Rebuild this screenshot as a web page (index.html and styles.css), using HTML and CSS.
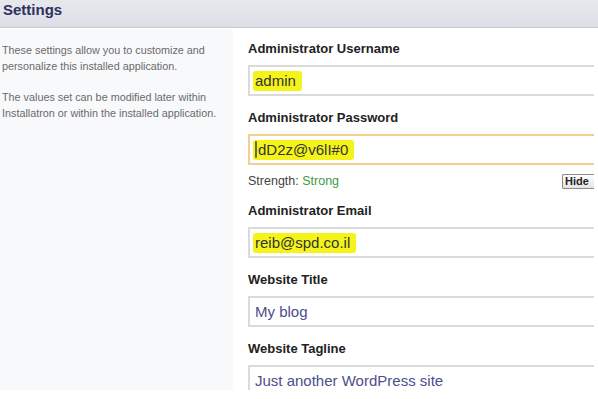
FILE: index.html
```html
<!DOCTYPE html>
<html lang="en">
<head>
    <meta charset="UTF-8">
    <title>Settings</title>
    <link rel="stylesheet" href="styles.css">
</head>
<body>
    <div class="header">Settings</div>

    <div class="page">
        <div class="sidebar">
            <p>These settings allow you to customize and personalize this installed application.</p>
            <p>The values set can be modified later within Installatron or within the installed application.</p>
        </div>

        <div class="fields">
            <div class="field">
                <label>Administrator Username</label>
                <div class="input"><span class="mark">admin</span></div>
            </div>
            <div class="field">
                <label>Administrator Password</label>
                <div class="input input-focus"><span class="mark"><span class="caret"></span>dD2z@v6lI#0</span></div>
                <div class="strength">
                    <span>Strength: <span class="strong">Strong</span></span>
                    <button class="hide-btn">Hide</button>
                </div>
            </div>
            <div class="field">
                <label>Administrator Email</label>
                <div class="input"><span class="mark">reib@spd.co.il</span></div>
            </div>
            <div class="field">
                <label>Website Title</label>
                <div class="input input-value">My blog</div>
            </div>
            <div class="field">
                <label>Website Tagline</label>
                <div class="input input-value">Just another WordPress site</div>
            </div>
        </div>
    </div>
</body>
</html>
```

FILE: styles.css
```css
body {
    margin: 0;
    font-family: Arial, "Liberation Sans", sans-serif;
    background-color: #ffffff;
    width: 598px;
    height: 399px;
    overflow: hidden;
}

.header {
    height: 28px;
    line-height: 20px;
    padding-left: 3px;
    font-size: 15px;
    font-weight: bold;
    color: #2f3060;
    background: linear-gradient(#e6e8ec, #dcdfe6);
    border-bottom: 1px solid #c6c8d2;
    box-sizing: border-box;
}

.page {
    display: flex;
    width: 594px;
    height: 361px;
    margin-top: 1px;
    overflow: hidden;
}

.sidebar {
    width: 233px;
    flex-shrink: 0;
    background-color: #f8f9fb;
    padding: 14px 0 0 2px;
    box-sizing: border-box;
}

.sidebar p {
    margin: 0 0 16px 0;
    font-size: 10.8px;
    line-height: 15.5px;
    color: #6a6a6a;
}

.fields {
    flex: 1;
    padding: 12px 0 0 15px;
    overflow: hidden;
}

.field {
    margin-bottom: 14px;
}

label {
    display: block;
    font-size: 13px;
    font-weight: bold;
    line-height: 16px;
    color: #222222;
    margin-bottom: 8px;
}

.input {
    width: 380px;
    height: 31px;
    border: 2px solid #dadada;
    box-sizing: border-box;
    padding: 4px 5px;
    font-size: 15px;
    line-height: 19px;
    color: #333333;
}

.input-focus {
    border-color: #f3cf90;
}

.input-value {
    color: #4d4d8c;
}

.mark {
    background-color: #f4f41a;
    padding: 1px 6px 2px 2px;
    margin-left: -2px;
    border-radius: 3px;
}

.caret {
    display: inline-block;
    width: 2px;
    height: 17px;
    margin-right: 1px;
    vertical-align: -3px;
    border-radius: 1px;
    background-color: #6a6a40;
}

.strength {
    display: flex;
    justify-content: space-between;
    align-items: center;
    margin-top: 8px;
    height: 16px;
    font-size: 12.5px;
    color: #444444;
}

.strong {
    color: #3f9a3f;
}

.hide-btn {
    width: 32px;
    text-align: left;
    font-family: Arial, "Liberation Sans", sans-serif;
    font-size: 11px;
    font-weight: bold;
    color: #222222;
    padding: 0 2px;
    height: 15px;
    border: 1px solid #8a8a8a;
    border-right: none;
    border-radius: 2px 0 0 2px;
    background: linear-gradient(#ffffff, #e4e4e4);
}
```
